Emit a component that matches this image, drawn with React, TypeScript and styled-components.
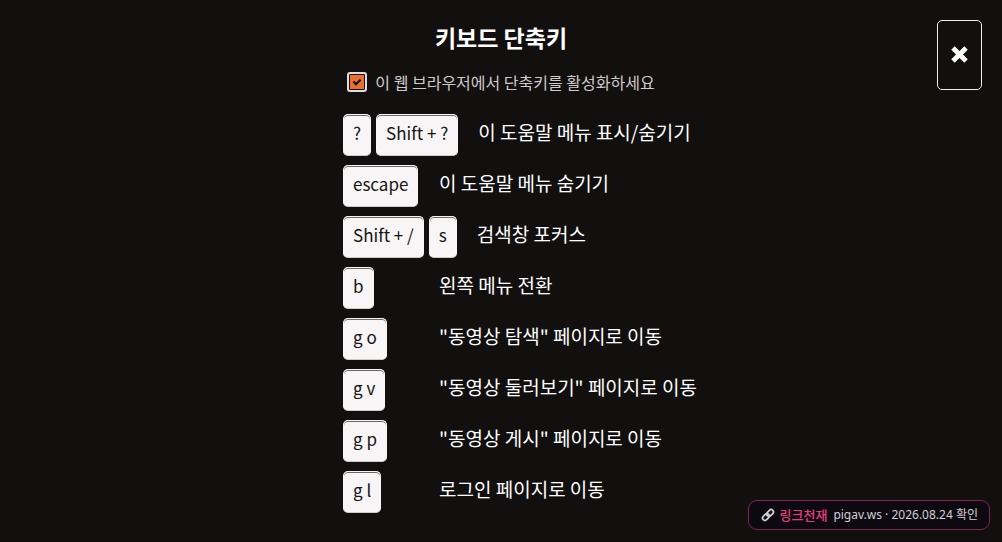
import React, { useState } from "react";
import styled, { createGlobalStyle } from "styled-components";

const GlobalStyle = createGlobalStyle`
  *, *::before, *::after { box-sizing: border-box; }
  body {
    margin: 0;
    background: #12100f;
    color: #fff;
    font-family: "Noto Sans CJK KR", "Noto Sans", sans-serif;
  }
`;

const Overlay = styled.main`
  min-height: 100vh;
  display: flex;
  justify-content: center;
  padding: 20px 20px 28px;
  background: #12100f;
  border-bottom: 2px solid #0b0909;
`;

const Panel = styled.section`
  width: 316px;
`;

const Title = styled.h1`
  margin: 0;
  font-size: 23px;
  line-height: 34px;
  font-weight: 700;
  text-align: center;
`;

const ToggleLabel = styled.label`
  display: flex;
  align-items: center;
  justify-content: center;
  gap: 8px;
  margin: 16px 0 20px;
  font-size: 16px;
  line-height: 24px;
  color: #d0cbca;
  white-space: nowrap;
`;

const Tick = styled.span`
  position: relative;
  display: flex;
  width: 20px;
  height: 20px;
`;

const TickInput = styled.input`
  appearance: none;
  width: 20px;
  height: 20px;
  margin: 0;
  border: 2px solid #e2dcdb;
  border-radius: 3px;
  background: #12100f;
  cursor: pointer;

  &:checked {
    background: #e8702a;
    box-shadow: inset 0 0 0 1px #12100f;
  }
`;

const TickMark = styled.svg`
  position: absolute;
  inset: 4px;
  pointer-events: none;
`;

const Shortcuts = styled.dl`
  display: grid;
  gap: 9px;
  margin: 0;
`;

const Row = styled.div`
  display: flex;
  gap: 20px;
  white-space: nowrap;
`;

const Keys = styled.dt`
  display: flex;
  gap: 5px;
  min-width: 76px;
`;

const Key = styled.kbd`
  height: 42px;
  padding: 0 9px;
  border: 1px solid #f7f5f5;
  border-bottom-color: #cfcbca;
  border-radius: 5px;
  background: #f7f5f5;
  box-shadow: inset 0 1px 0 #6b6867;
  color: #161413;
  font-family: inherit;
  font-size: 17px;
  line-height: 36px;
`;

const Description = styled.dd`
  margin: 0;
  font-size: 19px;
  font-weight: 400;
  line-height: 36px;
`;

const CloseButton = styled.button`
  position: fixed;
  top: 20px;
  right: 20px;
  display: flex;
  align-items: center;
  justify-content: center;
  width: 45px;
  height: 70px;
  padding: 0 0 2px;
  border: 1px solid #f1eeee;
  border-radius: 5px;
  background: #12100f;
  color: #fff;
  cursor: pointer;
`;

const Badge = styled.aside`
  position: fixed;
  right: 12px;
  bottom: 12px;
  display: flex;
  align-items: center;
  height: 30px;
  padding: 0 11px 0 12px;
  border: 1px solid #84234f;
  border-radius: 9px;
  background: #0c0a10;
  color: #d2cfd6;
  font-family: "Noto Sans", "Noto Sans CJK KR", sans-serif;
  font-size: 12px;
  line-height: 16px;
  white-space: nowrap;
`;

const BadgeName = styled.strong`
  margin: 0 6px 0 5px;
  color: #e93c80;
  font-size: 13px;
  font-weight: 500;
`;

const shortcuts = [
  { keys: ["?", "Shift + ?"], text: "이 도움말 메뉴 표시/숨기기" },
  { keys: ["escape"], text: "이 도움말 메뉴 숨기기" },
  { keys: ["Shift + /", "s"], text: "검색창 포커스" },
  { keys: ["b"], text: "왼쪽 메뉴 전환" },
  { keys: ["g o"], text: '"동영상 탐색" 페이지로 이동' },
  { keys: ["g v"], text: '"동영상 둘러보기" 페이지로 이동' },
  { keys: ["g p"], text: '"동영상 게시" 페이지로 이동' },
  { keys: ["g l"], text: "로그인 페이지로 이동" },
];

export default function App() {
  const [enabled, setEnabled] = useState(true);
  return (
    <>
      <GlobalStyle />
      <Overlay>
        <Panel>
          <Title>키보드 단축키</Title>
          <ToggleLabel>
            <Tick>
              <TickInput
                type="checkbox"
                checked={enabled}
                onChange={(e) => setEnabled(e.target.checked)}
              />
              {enabled && (
                <TickMark width="12" height="12" viewBox="0 0 12 12" aria-hidden="true">
                  <path d="M2.500 5.600 5 8.200 9.600 3.800" fill="none" stroke="#12100f" strokeWidth="2.200" />
                </TickMark>
              )}
            </Tick>
            이 웹 브라우저에서 단축키를 활성화하세요
          </ToggleLabel>
          <Shortcuts>
            {shortcuts.map((s) => (
              <Row key={s.text}>
                <Keys>
                  {s.keys.map((k) => (
                    <Key key={k}>{k}</Key>
                  ))}
                </Keys>
                <Description>{s.text}</Description>
              </Row>
            ))}
          </Shortcuts>
        </Panel>
      </Overlay>
      <CloseButton type="button" aria-label="닫기">
        <svg width="19" height="19" viewBox="0 0 18 18" aria-hidden="true">
          <path d="M2.800 2.800 15.200 15.200M15.200 2.800 2.800 15.200" stroke="currentColor" strokeWidth="4.600" />
        </svg>
      </CloseButton>
      <Badge>
        <svg width="14" height="14" viewBox="0 0 24 24" fill="none" stroke="currentColor" strokeWidth="3" strokeLinecap="round" aria-hidden="true">
          <g transform="rotate(-45 12 12)">
            <rect x="0.500" y="8" width="13" height="8" rx="4" />
            <rect x="10.500" y="8" width="13" height="8" rx="4" />
          </g>
        </svg>
        <BadgeName>링크천재</BadgeName>
        <span>pigav.ws · 2026.08.24 확인</span>
      </Badge>
    </>
  );
}
